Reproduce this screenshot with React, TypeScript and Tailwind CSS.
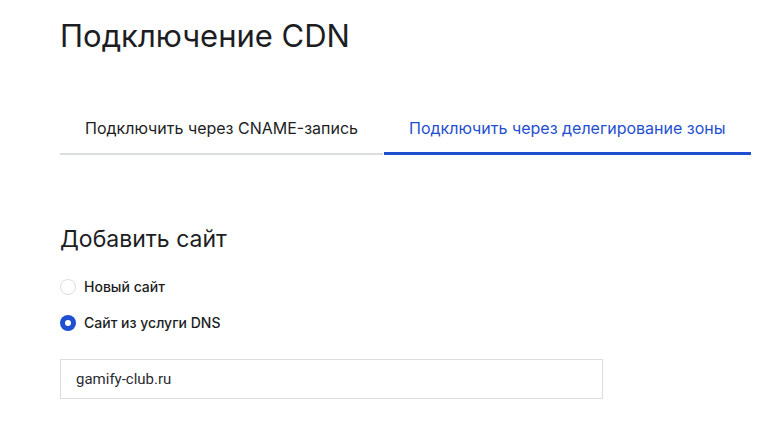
import React, { useState } from 'react';

const tabs = ['Подключить через CNAME-запись', 'Подключить через делегирование зоны'];
const options = ['Новый сайт', 'Сайт из услуги DNS'];

export default function App() {
  const [tab, setTab] = useState(1);
  const [option, setOption] = useState(1);

  return (
    <div className="min-h-screen bg-white pl-[60px] pt-[16px] text-[#1c1e24]" style={{ fontFamily: 'Inter, "Noto Sans", sans-serif' }}>
      <h1 className="text-[31px] leading-[40px] font-normal">Подключение CDN</h1>

      {/* Tabs */}
      <div className="mt-[59px] flex">
        {tabs.map((t, i) => (
          <button
            key={t}
            onClick={() => setTab(i)}
            className={`h-[40px] px-[25px] pb-[12px] text-[16px] leading-[20px] ${
              tab === i ? 'border-b-[3px] border-[#1f4fd1] text-[#1f4fd1]' : 'border-b-2 border-[#dcdde0] text-[#1c1e24] mr-[1px]'
            }`}
          >
            {t}
          </button>
        ))}
      </div>

      {/* Add site */}
      <h2 className="mt-[70px] text-[23px] leading-[28px] font-normal">Добавить сайт</h2>
      <div className="mt-[26px] flex flex-col gap-[20px]">
        {options.map((o, i) => (
          <label key={o} className="flex items-center gap-[8px] cursor-pointer" onClick={() => setOption(i)}>
            {option === i ? (
              <span className="w-[16px] h-[16px] rounded-full bg-[#1f4fd1] flex items-center justify-center">
                <span className="w-[6px] h-[6px] rounded-full bg-white" />
              </span>
            ) : (
              <span className="w-[16px] h-[16px] rounded-full border border-[#dcdde0] bg-white" />
            )}
            <span className="text-[14px] leading-[16px] font-medium">{o}</span>
          </label>
        ))}
      </div>

      <div className="mt-[28px] w-[543px] h-[40px] border border-[#dcdde0] flex items-center px-[15px]">
        <span className="text-[15px] text-[#2a2c31]" style={{ fontFamily: 'Roboto, sans-serif' }}>gamify-club.ru</span>
      </div>
    </div>
  );
}
